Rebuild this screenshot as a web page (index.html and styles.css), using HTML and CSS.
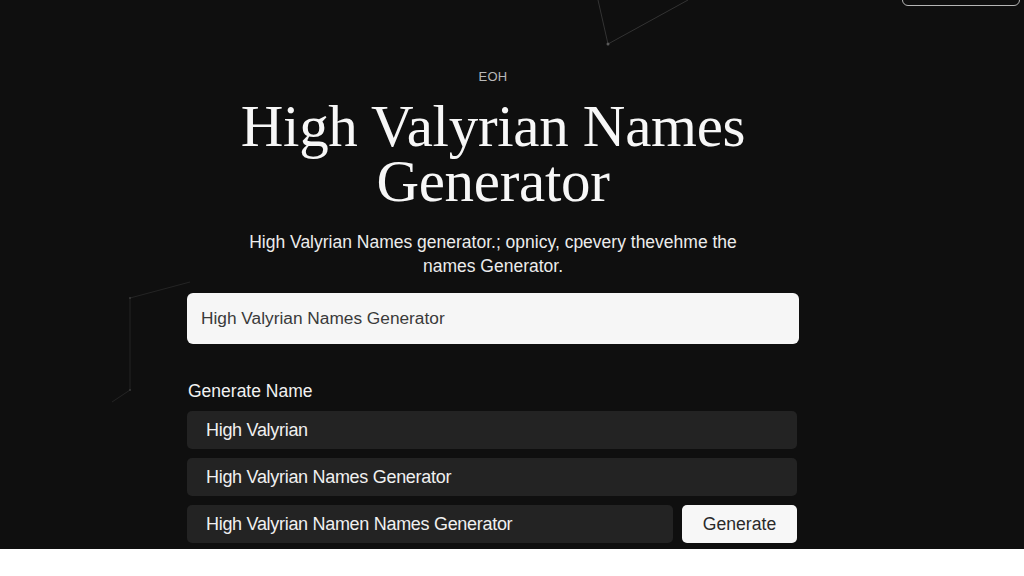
FILE: index.html
```html
<!DOCTYPE html>
<html lang="en">
<head>
<meta charset="utf-8">
<title>High Valyrian Names Generator</title>
<link rel="stylesheet" href="styles.css">
</head>
<body>
<main class="stage">
  <svg class="stars" width="1024" height="549" viewBox="0 0 1024 549" aria-hidden="true">
    <g stroke="#333333" stroke-width="1" fill="none">
      <line x1="598" y1="0" x2="608" y2="44"/>
      <line x1="608" y1="44" x2="688" y2="0"/>
    </g>
    <g stroke="#242424" stroke-width="1" fill="none">
      <line x1="130" y1="298" x2="130" y2="390"/>
      <line x1="130" y1="298" x2="190" y2="282"/>
      <line x1="130" y1="390" x2="112" y2="402"/>
    </g>
    <g fill="#5a5a5a">
      <circle cx="608" cy="44" r="1.5"/>
    </g>
    <g fill="#3a3a3a">
      <circle cx="130" cy="298" r="1"/>
      <circle cx="130" cy="390" r="1"/>
    </g>
  </svg>
  <div class="corner-btn"></div>

  <section class="content">
    <div class="eyebrow">EOH</div>
    <h1 class="title">High Valyrian Names<br>Generator</h1>
    <p class="lead">High Valyrian Names generator.; opnicy, cpevery thevehme the<br>names Generator.</p>
    <div class="search">High Valyrian Names Generator</div>

    <div class="label">Generate Name</div>
    <div class="rows">
      <div class="row">High Valyrian</div>
      <div class="row">High Valyrian Names Generator</div>
      <div class="row-line">
        <div class="row grow">High Valyrian Namen Names Generator</div>
        <button class="btn">Generate</button>
      </div>
    </div>
  </section>
</main>
</body>
</html>
```

FILE: styles.css
```css
* { box-sizing: border-box; }

html, body {
  margin: 0;
  padding: 0;
  background: #ffffff;
}

body {
  width: 1024px;
  height: 576px;
  overflow: hidden;
  font-family: "Liberation Sans", Arial, sans-serif;
}

.stage {
  position: relative;
  height: 549px;
  background: #0f0f0f;
  overflow: hidden;
  display: flex;
  justify-content: center;
  padding-right: 38px;
}

.stars {
  position: absolute;
  left: 0;
  top: 0;
  pointer-events: none;
}

.corner-btn {
  position: absolute;
  left: 902px;
  top: -40px;
  width: 118px;
  height: 46px;
  border: 1.5px solid #b5b5b5;
  border-radius: 6px;
}

.content {
  position: relative;
  width: 612px;
  padding-top: 69px;
  display: flex;
  flex-direction: column;
  align-items: center;
}

.eyebrow {
  font-size: 13px;
  line-height: 16px;
  color: #b8b8b8;
  letter-spacing: 0.2px;
}

.title {
  margin: 14px 0 0;
  font-family: "Liberation Serif", "Times New Roman", serif;
  font-weight: normal;
  font-size: 59px;
  line-height: 55px;
  color: #f7f7f7;
  text-align: center;
  letter-spacing: -0.3px;
}

.lead {
  margin: 21px 0 0;
  font-size: 17.5px;
  line-height: 24px;
  color: #ececec;
  text-align: center;
  letter-spacing: 0;
}

.search {
  align-self: stretch;
  margin-top: 15px;
  height: 51px;
  background: #f6f6f6;
  border-radius: 6px;
  padding: 0 14px;
  display: flex;
  align-items: center;
  font-size: 17.3px;
  color: #3a3a3a;
}

.label {
  align-self: stretch;
  margin-top: 37px;
  padding-left: 1px;
  font-size: 17.5px;
  line-height: 20px;
  color: #f2f2f2;
}

.rows {
  align-self: stretch;
  margin-top: 10px;
  padding-right: 2px;
  display: flex;
  flex-direction: column;
  gap: 9px;
}

.row {
  height: 38px;
  background: #232323;
  border-radius: 5px;
  padding: 0 19px;
  display: flex;
  align-items: center;
  font-size: 18px;
  color: #f0f0f0;
  letter-spacing: -0.3px;
}

.row-line {
  display: flex;
  gap: 9px;
}

.grow { flex: 1; }

.btn {
  width: 115px;
  height: 38px;
  border: none;
  border-radius: 5px;
  background: #f7f7f7;
  color: #2a2a2a;
  font-family: "Liberation Sans", Arial, sans-serif;
  font-size: 17.6px;
  padding: 0;
}
```
